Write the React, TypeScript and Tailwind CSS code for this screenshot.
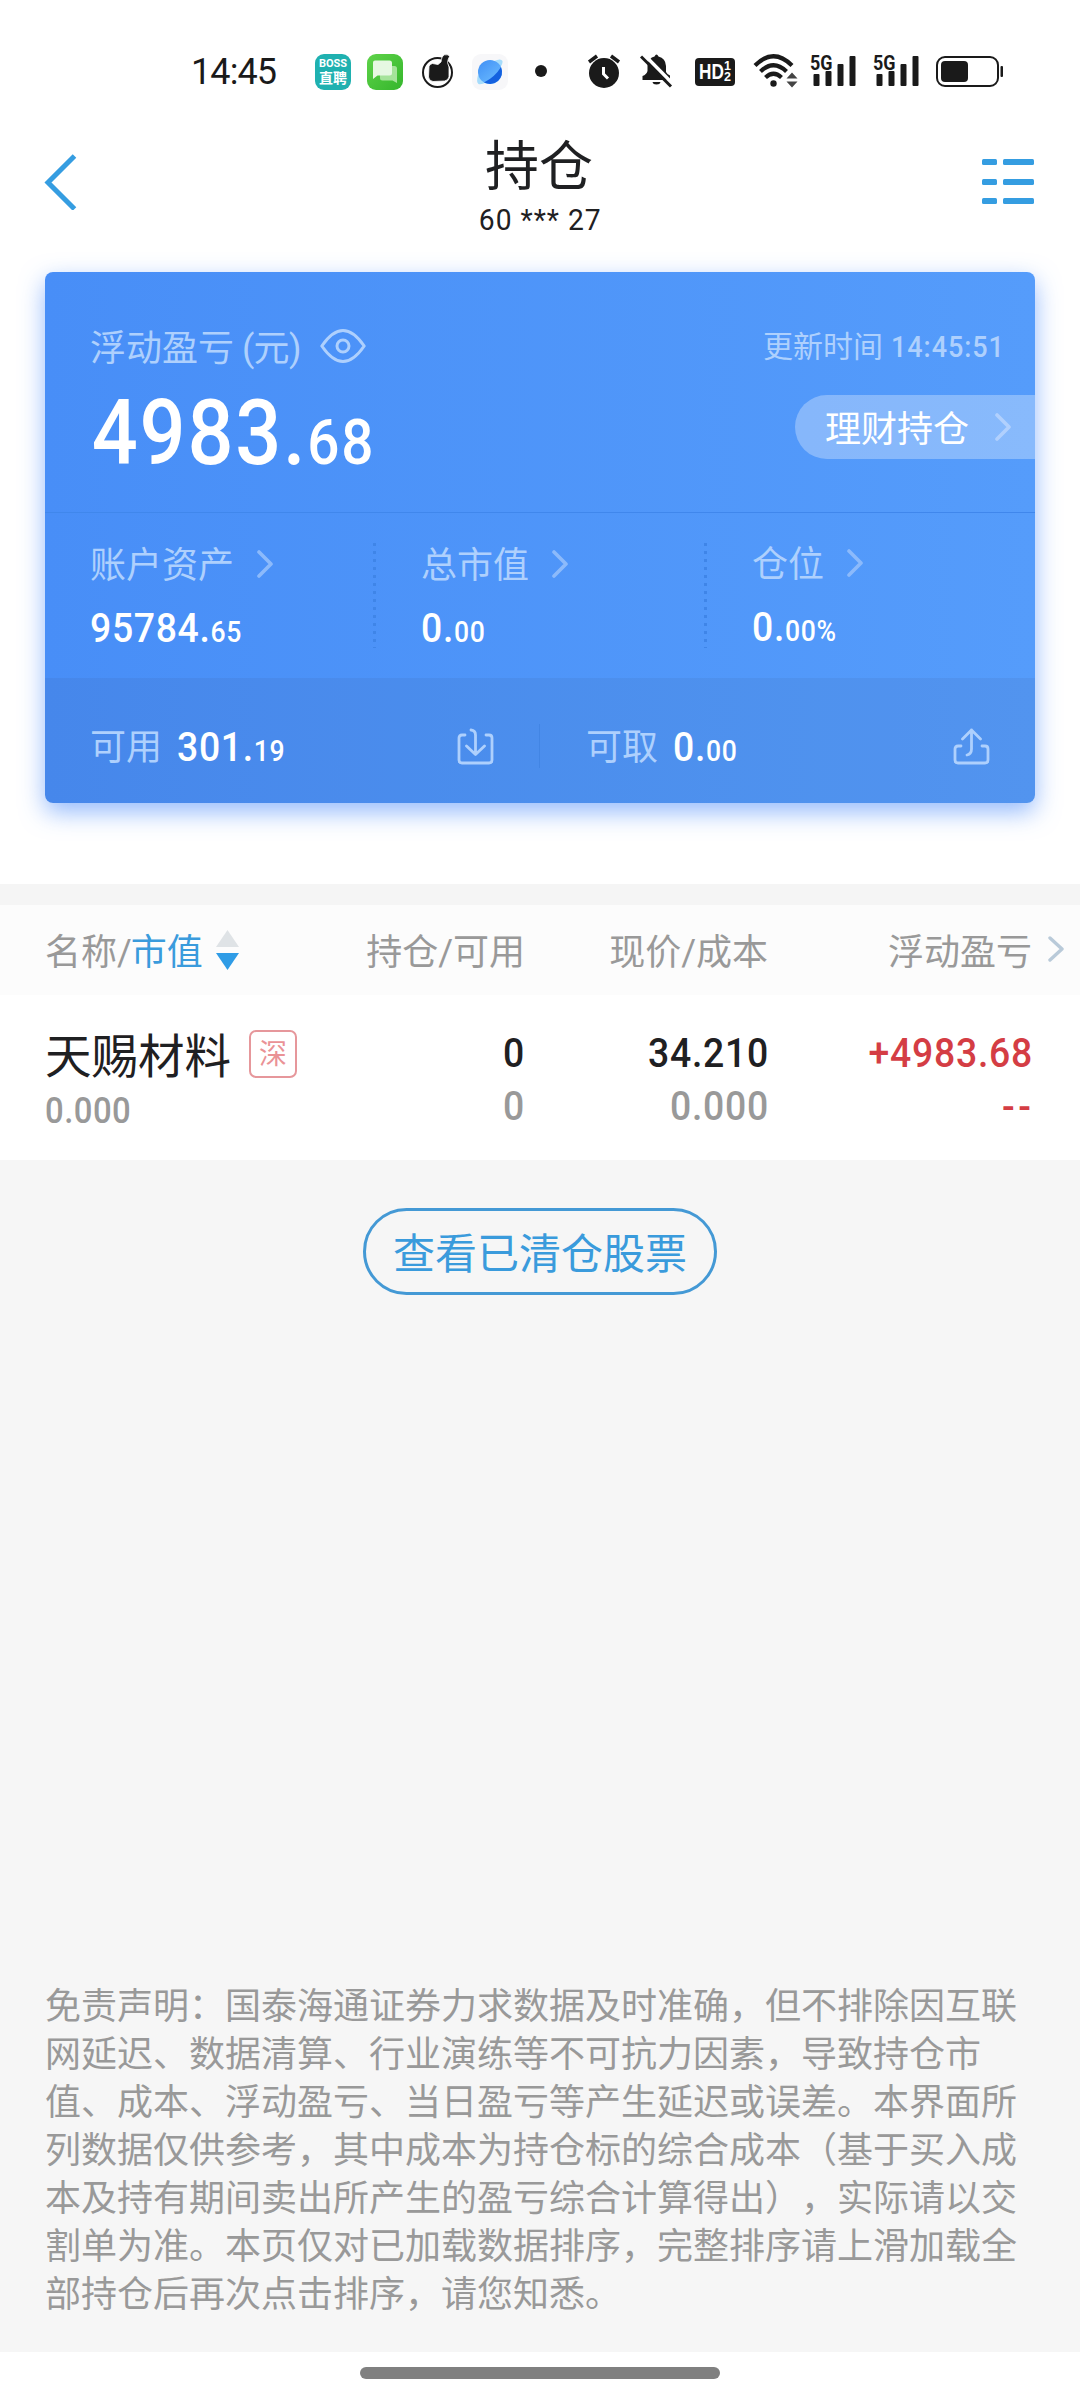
import React from "react";

const DISCLAIMER = [
  "免责声明：国泰海通证券力求数据及时准确，但不排除因互联",
  "网延迟、数据清算、行业演练等不可抗力因素，导致持仓市",
  "值、成本、浮动盈亏、当日盈亏等产生延迟或误差。本界面所",
  "列数据仅供参考，其中成本为持仓标的综合成本（基于买入成",
  "本及持有期间卖出所产生的盈亏综合计算得出），实际请以交",
  "割单为准。本页仅对已加载数据排序，完整排序请上滑加载全",
  "部持仓后再次点击排序，请您知悉。",
];

function Chevron({ className, w = 16, h = 28, sw = 3.6 }: { className?: string; w?: number; h?: number; sw?: number }) {
  return (
    <svg className={className} width={w} height={h} viewBox={`0 0 ${w} ${h}`} fill="none" stroke="currentColor" strokeWidth={sw} strokeLinecap="round" strokeLinejoin="round">
      <path d={`M2 2L${w - 2} ${h / 2}L2 ${h - 2}`} />
    </svg>
  );
}

function Money({ whole, frac }: { whole: string; frac: string }) {
  return (
    <div className="h-10 origin-left scale-x-90 text-[41.5px] leading-[42px] font-medium tracking-[0.018em] text-white">
      {whole}.<span className="text-[29.5px] leading-none">{frac}</span>
    </div>
  );
}

function Signal() {
  return (
    <svg className="overflow-visible" width="47" height="36" viewBox="0 0 47 36" fill="#1a1a1a">
      <text x="0" y="15.5" fontFamily="Roboto" fontWeight="700" fontSize="21" textLength="22.5" lengthAdjust="spacingAndGlyphs">5G</text>
      <rect x="3.5" y="20" width="6" height="12" rx="1" />
      <rect x="15.5" y="17" width="6" height="15" rx="1" />
      <rect x="27.5" y="10" width="6" height="22" rx="1" />
      <rect x="39.5" y="2" width="6" height="30" rx="1" />
    </svg>
  );
}

function StatusBar() {
  return (
    <div className="flex h-[120px] items-start pt-[54px] pl-[191px]">
      <div className="-mt-[2px] h-10 w-[124px] text-[36px] leading-10 tracking-[-0.025em] text-[#1a1a1a]">14:45</div>
      <div className="flex h-9 w-9 flex-col items-center rounded-[9px] bg-[#1fb1b0] pt-[4px] text-white">
        <span className="text-[11px] leading-[12px] font-bold">BOSS</span>
        <span className="text-[14px] leading-[16px] font-bold">直聘</span>
      </div>
      <svg className="ml-4" width="36" height="36" viewBox="0 0 36 36">
        <defs>
          <linearGradient id="chat" x1="0" y1="0" x2="1" y2="1">
            <stop offset="0" stopColor="#5fd34a" />
            <stop offset="1" stopColor="#35b62c" />
          </linearGradient>
        </defs>
        <rect width="36" height="36" rx="9" fill="url(#chat)" />
        <path d="M13 12H27.5Q30 12 30 14.500V29L25.500 26.500H15.500Q13 26.500 13 24Z" fill="#a5e39a" />
        <path d="M8 6.500H22.500Q25 6.500 25 9V19Q25 21.500 22.500 21.500H10.500L6 25V8.500Q6 6.500 8 6.500Z" fill="#e6f8e2" />
      </svg>
      <svg className="ml-[17px]" width="36" height="36" viewBox="0 0 36 36">
        <circle cx="17.500" cy="18.500" r="14.500" fill="none" stroke="#1a1a1a" strokeWidth="2" />
        <path d="M18 10.500L21 8Q21.500 2 24.500 0.800Q29 0 29.500 2.500Q28 5 27.500 8.500L29 13V23Q28 26.500 24.500 27L13 27.500Q9 27 8.500 23L9 12.500Q9.500 10 12.500 9.500Z" fill="#1a1a1a" stroke="#fff" strokeWidth="0.800" />
      </svg>
      <svg className="ml-[16px]" width="36" height="36" viewBox="0 0 36 36">
        <defs>
          <linearGradient id="planet" x1="0" y1="0" x2="0.8" y2="1">
            <stop offset="0" stopColor="#3f8ff5" />
            <stop offset="1" stopColor="#6cbcff" />
          </linearGradient>
        </defs>
        <rect width="36" height="36" rx="9" fill="#f7f7f9" />
        <path d="M22 7Q29 4 30.500 7Q31 10 27 15ZM6 21Q4 28 6.500 30Q9 31 15 28Z" fill="#a6dcfb" />
        <circle cx="18" cy="18" r="12" fill="url(#planet)" />
        <path d="M29 13Q32 21 26 27Q20 32 12 28.500Q23 23 29 13Z" fill="#1460df" />
      </svg>
      <div className="mt-[11px] ml-[27px] h-3 w-3 rounded-full bg-[#1a1a1a]" />

      <svg className="ml-[40px]" width="34" height="36" viewBox="0 0 34 36">
        <circle cx="17" cy="19" r="15" fill="#1a1a1a" />
        <path d="M2 8L10 2M24 2L32 8" stroke="#1a1a1a" strokeWidth="3.500" />
        <path d="M16.500 13V20L21 24.500" fill="none" stroke="#fff" strokeWidth="3" />
      </svg>
      <svg className="ml-[19px]" width="34" height="36" viewBox="0 0 34 36">
        <path d="M14.500 2.500Q16.500 -1.500 18.500 2.500Q25.500 4 26 12V18Q27 20 30 21.500V26H2.500V22Q6.500 20.500 7.500 17V11Q8.500 4 14.500 2.500ZM12.500 28H20.500Q20 30.500 16.500 30.500Q13 30.500 12.500 28Z" fill="#1a1a1a" />
        <path d="M3.500 0L33 30" stroke="#fff" strokeWidth="3.500" />
        <path d="M1 2.500L31 32.500" stroke="#1a1a1a" strokeWidth="3" />
      </svg>
      <div className="mt-1 ml-[21px] flex h-7 w-10 items-center rounded-[4px] bg-[#1a1a1a] pl-[4px] font-['Liberation_Sans'] font-bold text-white">
        <span className="w-[25px] origin-left scale-x-[0.78] text-[22px] leading-7">HD</span>
        <span className="flex flex-col items-center text-[12.5px] leading-none">
          <span className="h-[11px] leading-[11px]">1</span>
          <span className="h-[11px] leading-[11px]">2</span>
        </span>
      </div>
      <svg className="ml-[17px]" width="46" height="36" viewBox="0 0 46 36" fill="none" stroke="#1a1a1a" strokeWidth="4.200">
        <path d="M3 11.500Q21.500 -7 40 11.500M8.500 17.500Q21.500 5 34.500 17.500M13.500 23.500Q21.500 16 29.500 23.500" />
        <circle cx="21.500" cy="29.500" r="3.200" fill="#1a1a1a" stroke="none" />
        <path d="M34.500 24.500L40 18.500L45.500 24.500ZM34.500 27.500L40 33.500L45.500 27.500Z" fill="#444" stroke="none" />
      </svg>
      <div className="ml-[12px]"><Signal /></div>
      <div className="ml-[16px]"><Signal /></div>
      <svg className="ml-[16px]" width="68" height="36" viewBox="0 0 68 36">
        <rect x="1" y="3" width="61" height="29" rx="8" fill="none" stroke="#1a1a1a" strokeWidth="2" />
        <rect x="5" y="7" width="27" height="21" rx="4" fill="#1a1a1a" />
        <rect x="64.500" y="12" width="2.500" height="11" rx="1" fill="#1a1a1a" />
      </svg>
    </div>
  );
}

function NavBar() {
  return (
    <div className="flex h-[152px] items-start justify-between pr-[46px] pl-[44px]">
      <svg className="mt-[34px]" width="52" height="56" viewBox="0 0 52 56" fill="none" stroke="#359de1" strokeWidth="5">
        <path d="M30.500 2L4 28.500L30.500 55" />
      </svg>
      <div className="flex flex-col items-center pt-[18px] text-[#1f2022]">
        <div className="h-[60px] text-[54px] leading-[60px]">持仓</div>
        <div className="mt-[4px] h-9 scale-x-[0.94] pl-[2px] text-[30px] leading-9 tracking-[0.035em]">60 *** 27</div>
      </div>
      <svg className="mt-[37px]" width="52" height="50" viewBox="0 0 52 50" fill="#359de1">
        <rect y="2" width="15" height="6" rx="1.500" /><rect x="21" y="2" width="31" height="6" rx="1.500" />
        <rect y="22" width="15" height="6" rx="1.500" /><rect x="21" y="22" width="31" height="6" rx="1.500" />
        <rect y="41" width="15" height="6" rx="1.500" /><rect x="21" y="41" width="31" height="6" rx="1.500" />
      </svg>
    </div>
  );
}

const DOTS = "mt-[30px] h-[105px] w-[3px] bg-[repeating-linear-gradient(to_bottom,#3f85e8_0px,#3f85e8_3px,transparent_3px,transparent_8px)]";

function Metric({ label, whole, frac, className }: { label: string; whole: string; frac: string; className: string }) {
  return (
    <div className={className}>
      <div className="flex h-10 items-center">
        <span className="mt-[4px] text-[36px] leading-10 text-[#aed0fd]">{label}</span>
        <Chevron className="ml-[23px] text-[#8cbafb]" />
      </div>
      <div className="mt-[23px]"><Money whole={whole} frac={frac} /></div>
    </div>
  );
}

function AssetCard() {
  return (
    <div className="mx-[45px] h-[531px] rounded-[8px] bg-linear-to-r from-[#488ef7] to-[#559cfb] shadow-[0_9px_24px_rgba(60,130,250,0.55)]">
      <div className="flex h-[240px] justify-between pl-[45px]">
        <div className="pt-[50px]">
          <div className="flex h-[50px] items-center text-[36px] leading-[50px] text-[#aed0fd]">
            <span className="mt-[3px]">浮动盈亏</span>
            <span className="mt-[3px] ml-[8px] tracking-[-0.02em]">(元)</span>
            <svg className="mb-[2px] ml-[19px]" width="46" height="34" viewBox="0 0 46 34" fill="none" stroke="currentColor" strokeWidth="3">
              <path d="M1.800 17C8 8 15 1.500 23 1.500S38 8 44.200 17C38 26 31 32.500 23 32.500S8 26 1.800 17Z" strokeLinejoin="round" />
              <circle cx="23" cy="17" r="6" />
            </svg>
          </div>
          <div className="mt-[17px] h-[90px] w-[320px] origin-left scale-x-90 pl-[2px] text-[90px] leading-[90px] font-medium tracking-[0.022em] text-white">
            4983.<span className="text-[63px] leading-none">68</span>
          </div>
        </div>
        <div className="flex flex-col items-end pt-[50px]">
          <div className="mr-[32px] flex h-12 text-[30px] leading-[50px] text-[#aed0fd]">
            更新时间
            <span className="ml-[8px] w-[112px] origin-left scale-x-90 font-medium tracking-[0.035em]">14:45:51</span>
          </div>
          <div className="mt-[25px] flex h-16 w-[240px] items-center rounded-l-full bg-white/30 pl-[30px]">
            <span className="mt-[5px] text-[36px] leading-[60px] text-white">理财持仓</span>
            <Chevron className="ml-[26px] text-[#b1d0fd]" />
          </div>
        </div>
      </div>
      <div className="h-px bg-[#4087ec]" />
      <div className="flex h-[165px]">
        <Metric className="w-[328px] pt-[31px] pl-[45px]" label="账户资产" whole="95784" frac="65" />
        <div className={DOTS} />
        <Metric className="w-[328px] pt-[31px] pl-[45px]" label="总市值" whole="0" frac="00" />
        <div className={DOTS} />
        <Metric className="pt-[30px] pl-[45px]" label="仓位" whole="0" frac="00%" />
      </div>
      <div className="flex h-[125px] items-start rounded-b-[8px] bg-[#304060]/8 pt-[46px]">
        <div className="flex h-[44px] w-[495px] items-center border-r border-[#4285e4] pl-[45px]">
          <span className="mt-[3px] w-[87px] text-[36px] leading-10 text-[#aed0fd]">可用</span>
          <Money whole="301" frac="19" />
          <svg className="mr-[45px] ml-auto" width="37" height="37" viewBox="0 0 37 37" fill="none" stroke="#aed0fd" strokeWidth="2.800" strokeLinecap="round" strokeLinejoin="round">
            <path d="M8 7H5Q2 7 2 10V32Q2 35 5 35H32Q35 35 35 32V10Q35 7 32 7H29M14 2Q18.500 2.500 18.500 7V26M9.500 18L18.500 26.500L27.500 18" />
          </svg>
        </div>
        <div className="flex h-[44px] flex-1 items-center pl-[46px]">
          <span className="mt-[3px] w-[87px] text-[36px] leading-10 text-[#aed0fd]">可取</span>
          <Money whole="0" frac="00" />
          <svg className="mr-[45px] ml-auto" width="37" height="37" viewBox="0 0 37 37" fill="none" stroke="#aed0fd" strokeWidth="2.800" strokeLinecap="round" strokeLinejoin="round">
            <path d="M8 18H5Q2 18 2 21V32Q2 35 5 35H32Q35 35 35 32V21Q35 18 32 18H29M14 27Q18.500 26 18.500 21V2M9.500 11L18.500 2L27.500 11" />
          </svg>
        </div>
      </div>
    </div>
  );
}

const CELL = "-mr-px origin-right scale-x-90 pt-[35px] text-right text-[41.500px] leading-[46px] font-medium tracking-[0.02em]";

export default function App() {
  return (
    <div className="flex h-[2400px] w-[1080px] flex-col overflow-hidden bg-white font-[Roboto,'Noto_Sans_CJK_SC',sans-serif] whitespace-nowrap [text-spacing-trim:space-all]">
      <StatusBar />
      <NavBar />
      <AssetCard />
      <div className="mt-[81px] h-[21px] bg-[#f5f5f5]" />
      <div className="flex h-[90px] items-center bg-[#fcfcfc] pl-[45px] text-[36px] leading-[50px] text-[#999999]">
        <div className="flex w-[250px] items-center">
          <span className="mt-[5px]">名称/</span>
          <span className="mt-[5px] -ml-px text-[#3a9bdc]">市值</span>
          <svg className="ml-[13px]" width="23" height="40" viewBox="0 0 23 40">
            <path d="M11.500 0L23 17H0Z" fill="#dfe3e6" />
            <path d="M11.500 40L0 23H23Z" fill="#2f9ce6" />
          </svg>
        </div>
        <span className="mt-[5px] w-[230px] text-right">持仓/可用</span>
        <span className="mt-[5px] w-[243px] text-right">现价/成本</span>
        <span className="mt-[5px] w-[264px] text-right">浮动盈亏</span>
        <Chevron className="mb-[2px] ml-[16px] text-[#b9cad9]" w={16} h={26} sw={3.4} />
      </div>
      <div className="flex h-[165px] pl-[45px]">
        <div className="w-[300px] pt-[32px]">
          <div className="flex h-[54px] items-center">
            <span className="mt-[5px] text-[46.500px] leading-[54px] text-[#1f2022]">天赐材料</span>
            <span className="ml-[18px] flex h-[48px] w-[48px] items-center justify-center rounded-[7px] border-2 border-[#e6979b] pt-[2px] text-[28px] leading-none text-[#ea9296]">深</span>
          </div>
          <div className="mt-[12px] h-9 origin-left scale-x-90 text-[36.500px] leading-9 font-medium tracking-[0.015em] text-[#999]">0.000</div>
        </div>
        <div className="w-[179px]">
          <div className={CELL}>
            <div className="text-[#1f2022]">0</div>
            <div className="mt-[7px] text-[#999]">0</div>
          </div>
        </div>
        <div className="w-[244px]">
          <div className={CELL}>
            <div className="text-[#1f2022]">34.210</div>
            <div className="mt-[7px] text-[#999]">0.000</div>
          </div>
        </div>
        <div className="w-[264px]">
          <div className={CELL}>
            <div className="text-[#d43d44]">+4983.68</div>
            <div className="mt-[8px] -mr-[2px] tracking-[0.1em] text-[#d43d44]">--</div>
          </div>
        </div>
      </div>
      <div className="flex h-[1192px] flex-col bg-[#f6f6f6]">
        <div className="mt-[48px] flex h-[87px] w-[354px] items-center justify-center self-center rounded-full border-3 border-[#4499d5] pt-[6px] text-[42px] leading-[60px] text-[#3a9bdc]">
          查看已清仓股票
        </div>
        <div className="mt-auto mb-[33px] pl-[45px] text-[36px] leading-[48px] text-[#999999]">
          {DISCLAIMER.map((line) => (
            <div key={line}>{line}</div>
          ))}
        </div>
      </div>
      <div className="flex h-[48px] justify-center bg-white pt-[15px]">
        <div className="h-3 w-[360px] rounded-full bg-[#808080]" />
      </div>
    </div>
  );
}
